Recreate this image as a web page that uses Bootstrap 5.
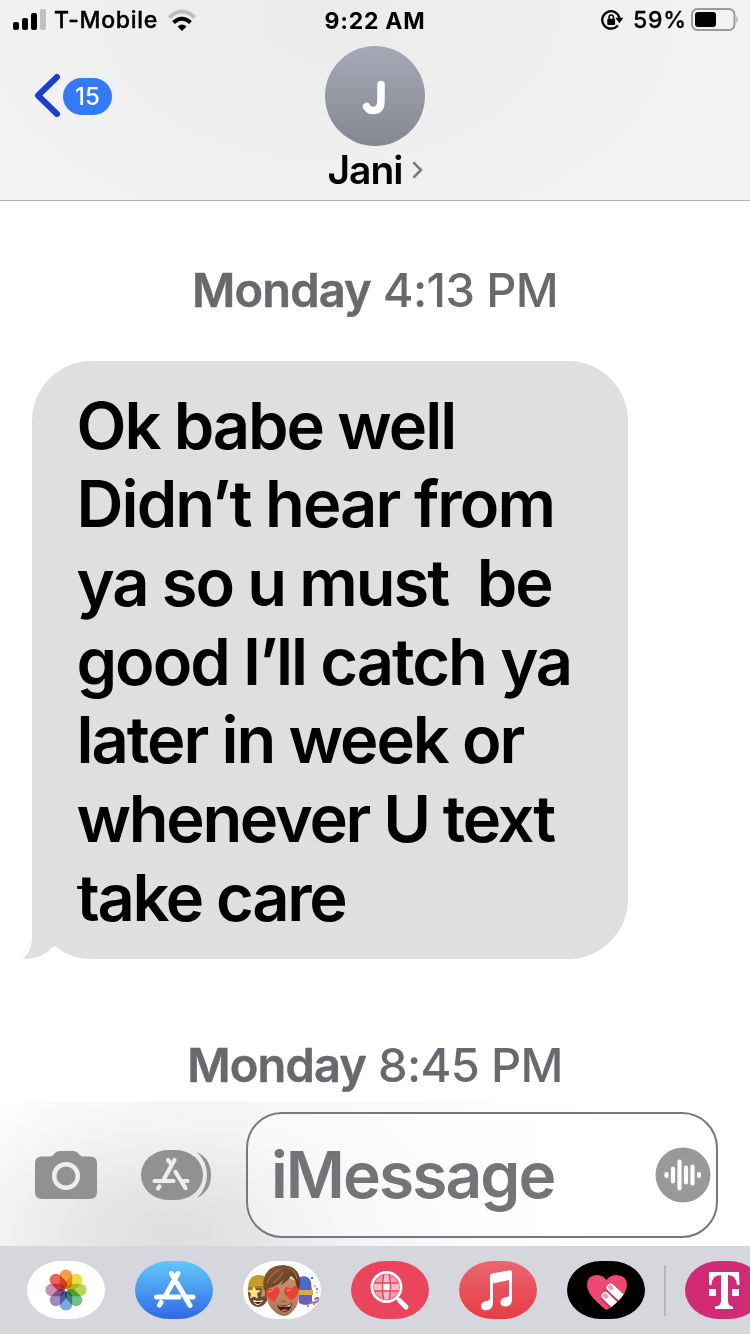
<!DOCTYPE html>
<html lang="en">
<head>
<meta charset="utf-8">
<meta name="viewport" content="width=device-width, initial-scale=1">
<title>Messages – Jani</title>
<link href="https://cdn.jsdelivr.net/npm/bootstrap@5.3.0/dist/css/bootstrap.min.css" rel="stylesheet">
<style>
body{font-family:Inter,"Liberation Sans",sans-serif;color:#000;height:1334px;overflow:hidden}
svg{display:block;flex:none}
.topbar{height:201px;border-bottom:1px solid #b0b0b2;background:radial-gradient(ellipse 420px 260px at 330px 20px,#ebebeb,#f3f3f3)}
.status{height:40px;line-height:42px;font-size:23px;font-weight:600}
.status>div{flex:1 1 0}
.carrier{letter-spacing:.7px;margin-left:8px;font-weight:500;-webkit-text-stroke:.4px #000}
.clock{letter-spacing:.75px;font-weight:700}
.unread{width:49px;height:37px;background:#347af6;font-size:24px;line-height:38px;font-weight:500}
.side{width:325px;padding:33px 0 0 34px}
.avatar{width:100px;height:100px;margin-top:6px;background:linear-gradient(#a5a9b6,#858891)}
.person{font-size:39px;line-height:48px;font-weight:600;letter-spacing:-1px}
.thread{height:901px}
.stamp{font-size:47px;line-height:56px;font-weight:500;color:#68686d;letter-spacing:-.65px}
.stamp b{font-weight:600;letter-spacing:-.85px;-webkit-text-stroke:.5px}
.bubble{width:596px;height:598px;margin:43px 0 0 32px;padding:25.500px 0 0 44.500px;border-radius:60px;background:#dfdfe1;font-size:65px;line-height:78.67px;font-weight:600;letter-spacing:-2.050px}
.bubble span{display:block;white-space:pre}
.bubble span:nth-child(2){letter-spacing:-1.900px}
.bubble span:nth-child(n+6){letter-spacing:-2.300px}
.tail{left:-10px;bottom:0}
.composer{height:144px;padding-top:2px;background:radial-gradient(ellipse 250px 150px at 175px 135px,#dedede 0,#e6e6e6 35%,#f4f4f4 75%,transparent 115%),linear-gradient(90deg,#fff,#f8f8f8 25%,#fafafa 55%,#fff 80%)}
.entry{width:472px;height:126px;margin-left:35px;border:2px solid #77777c;border-radius:36px;padding:0 5px 0 23px;background:linear-gradient(100deg,#ffffff66,#ffffff66 55%,#fff 80%);font-size:64px;font-weight:600;letter-spacing:-1.900px;color:#737378}
.apps{height:88px;background:#d5d7dc;padding:15px 0 0 27px}
.app-pill{width:78px;height:58px;flex:none;border-radius:34px/29px;margin-right:30px;overflow:hidden}
.rule{width:2px;height:51px;background:#b5b7bb;margin:4px 19px 0 -11px;flex:none}
.petals use{mix-blend-mode:multiply}
</style>
</head>
<body>
<header class="topbar">
  <div class="status d-flex">
    <div class="d-flex align-items-center">
      <svg class="ms-2" width="38" height="40"><g transform="translate(-8)"><rect x="13" y="22" width="6" height="8" rx="2"/><rect x="22" y="18" width="6" height="12" rx="2"/><rect x="31" y="13" width="6" height="17" rx="2"/><rect x="40" y="9" width="6" height="21" rx="2" fill="#bfbfbf"/></g></svg>
      <span class="carrier">T-Mobile</span>
      <svg width="32" height="40" style="margin-left:8px" viewBox="0 0 32 40"><g fill="none" stroke-width="4"><path d="M3.200 17.500Q16 5.500 28.800 17.500" stroke="#bdbdbd"/><path d="M7.500 22.500Q16 15 24.500 22.500" stroke="#000"/></g><path d="M11.500 26.500Q16 22.500 20.500 26.500L16 31Z"/></svg>
    </div>
    <div class="text-center clock">9:22 AM</div>
    <div class="d-flex align-items-center justify-content-end">
      <svg width="23" height="22" viewBox="0 0 23 22"><path d="M16.800 16.300A8.700 8.700 0 1 1 18.400 9" fill="none" stroke="#000" stroke-width="2.200"/><path d="M18.500 14.200L14.300 8.800H22.300Z"/><rect x="6.300" y="9.800" width="7.800" height="6.200" rx="1"/><path d="M8 10.500V8.300a2.200 2.200 0 0 1 4.400 0v2.200" fill="none" stroke="#000" stroke-width="1.500"/></svg>
      <span class="fw-medium" style="margin-left:9px;letter-spacing:.8px;-webkit-text-stroke:.3px">59%</span>
      <svg width="48" height="24" viewBox="0 0 48 24" style="margin:0 11px 0 4px"><rect x="1" y="1" width="42.500" height="21" rx="5.500" fill="none" stroke="#9a9a9a" stroke-width="2"/><rect x="4" y="4" width="21" height="15" rx="3"/><path d="M45.500 8q2.500 3.500 0 7z" fill="#9a9a9a"/></svg>
    </div>
  </div>
  <div class="d-flex">
    <div class="side d-flex align-items-start">
      <svg width="27" height="44" viewBox="0 0 27 44"><path d="M23 4L4 22.500L23 41" fill="none" stroke="#193fd8" stroke-width="6" stroke-linecap="round" stroke-linejoin="round"/></svg>
      <span class="unread rounded-pill text-white text-center" style="margin:5px 0 0 2px">15</span>
    </div>
    <div class="text-center">
      <div class="avatar rounded-circle"><svg width="100" height="100"><path d="M56 38.500V55Q56 64.500 48 64.500Q43.500 64.500 41.500 60.500" fill="none" stroke="#fff" stroke-width="7.500" stroke-linecap="round"/></svg></div>
      <div class="person d-flex align-items-center justify-content-center">Jani<svg width="11" height="18" viewBox="0 0 11 18" style="margin-left:9px"><path d="M2 2L9 9L2 16" fill="none" stroke="#76797e" stroke-width="2.500" stroke-linecap="round"/></svg></div>
    </div>
  </div>
</header>
<main class="thread bg-white">
  <div class="stamp text-center" style="padding-top:61px"><b>Monday</b> 4:13 PM</div>
  <div class="bubble position-relative"><span>Ok babe well</span><span>Didn’t hear from</span><span>ya so u must  be</span><span>good I’ll catch ya</span><span>later in week or</span><span>whenever U text</span><span>take care</span>
    <svg class="tail position-absolute" width="70" height="70" viewBox="0 0 70 70"><path d="M10 0V47Q10 64 0 70Q18 71 31 58L60 10V0Z" fill="#dfdfe1"/></svg>
  </div>
  <div class="stamp text-center" style="padding-top:78px"><b>Monday</b> 8:45 PM</div>
</main>
<section class="composer d-flex align-items-center">
  <svg width="62" height="50" viewBox="0 0 62 50" style="margin-left:35px"><path d="M7 6.500H16Q18 6 20 3Q22 1 25 1H38Q41 1 43 3Q45 6 47 6.500H55Q62 6.500 62 13V42Q62 49 55 49H7Q0 49 0 42V13Q0 6.500 7 6.500Z" fill="#919191"/><circle cx="31" cy="26" r="11.800" fill="none" stroke="#eee" stroke-width="4.500"/></svg>
  <svg width="70" height="50" viewBox="0 0 70 50" style="margin-left:44px"><rect width="62" height="50" rx="27" ry="25" fill="#919191"/><path d="M56 2Q70 9 70 25Q70 41 56 48Q66 38 66 25Q66 12 56 2Z" fill="#919191"/><g transform="translate(30.500 25)" stroke="#eee" stroke-width="4.200" stroke-linecap="round" fill="none"><path d="M-3.500-15L-.5-11M3-15L-7.500 4M4-3L14 13M-17 6H2M11 6H16M-12 11.500L-13.500 13.500"/></g></svg>
  <div class="entry d-flex align-items-center justify-content-between"><span>iMessage</span>
    <svg width="56" height="56" viewBox="0 0 56 56"><circle cx="28" cy="28" r="27.500" fill="#999"/><path d="M11.500 27V29M18 21.500V34.500M24.500 14.500V41.500M31 20.500V35.500M37.500 19.500V36.500M44 27V29" stroke="#fff" stroke-width="4.200" stroke-linecap="round"/></svg>
  </div>
</section>
<footer class="apps d-flex overflow-hidden">
  <div class="app-pill bg-white"><svg width="78" height="58" viewBox="-39 -29 78 58"><defs><rect id="petal" x="-6.200" y="-20.500" width="12.400" height="19.500" rx="6.200"/></defs><g class="petals" style="isolation:isolate"><use href="#petal" fill="#f2a044"/><use href="#petal" fill="#ecdf3f" transform="rotate(45)"/><use href="#petal" fill="#b9d65c" transform="rotate(90)"/><use href="#petal" fill="#75bd8b" transform="rotate(135)"/><use href="#petal" fill="#79abdf" transform="rotate(180)"/><use href="#petal" fill="#9c8bc4" transform="rotate(225)"/><use href="#petal" fill="#cf8cb4" transform="rotate(270)"/><use href="#petal" fill="#e96355" transform="rotate(315)"/></g><circle r="1.300" fill="#fff"/></svg></div>
  <div class="app-pill" style="background:linear-gradient(#61c8f8,#3169e8)"><svg width="78" height="58" viewBox="-39 -29 78 58"><g stroke="#fff" stroke-width="5" stroke-linecap="round" fill="none"><path d="M-2.500-16.500L-.5-13M4-16.500L-8.500 5.500M3-7L16 15.500M-17.500 7H5M13 7H19M-13 12.500L-14.500 15"/></g></svg></div>
  <div class="app-pill bg-white"><svg width="78" height="58" viewBox="0 0 78 58"><defs><linearGradient id="skin" x2="0" y2="1"><stop stop-color="#c98e65"/><stop offset=".5" stop-color="#c08763"/><stop offset="1" stop-color="#a8714f"/></linearGradient><linearGradient id="hair" x2="1" y2="1"><stop stop-color="#8f5a34"/><stop offset="1" stop-color="#55341f"/></linearGradient></defs>
    <path d="M5 26Q4 45 15 46Q26 45 26 28Z" fill="#6e4a33"/><path d="M5 27Q5 14 16 14Q25 14 26 26Q16 22 5 27Z" fill="#c69b2d"/><path d="M5 27Q15 22 26 26V29Q15 25 5 30Z" fill="#a87d20"/><path d="M11 25l2 4 5 .5-4 3 1 5-4-2-4 2 1-5-4-3 5-.5z" fill="#ffe681"/><path d="M19 28l3 1v6l-4 1z" fill="#b79c55"/><path d="M10 39Q15 41 20 39Q18 44 14 44Q11 43 10 39Z" fill="#fff"/><path d="M11 41H19Q15 45 11 41Z" fill="#3e1d18"/>
    <path d="M54 17Q66 12 68 22L69 30V42Q63 46 56 42Z" fill="#6b5cc0"/><path d="M54 18Q65 12 68 22V27Q62 28 54 26Z" fill="#3f6fd0"/><path d="M60 17l2 2 3-1-1 3" fill="#d14b5a"/><path d="M56 29H70V34H56Z" fill="#dfa64a"/><path d="M66 41Q75 43 76 38Q74 35 72 39" fill="none" stroke="#8d67c3" stroke-width="2"/><g fill="#3e78dd"><circle cx="69" cy="17" r="1.200"/><circle cx="74" cy="28" r="1"/><circle cx="65" cy="45" r="1"/></g><g fill="#edbd3b"><circle cx="72" cy="25" r="1.200"/><circle cx="74" cy="31" r="1"/></g><circle cx="71" cy="43" r="1.200" fill="#e57f4b"/>
    <path d="M23 22Q22 40 28 47Q35 55 41 55Q47 55 53 46Q57 40 56 22Q40 10 23 22Z" fill="url(#skin)"/><path d="M22 30Q19 24 21 17Q25 4 41 4Q57 6 57 21Q57 27 55 29Q53 25 52 19Q50 17 48 15Q44 21 38 24Q40 20 41 18Q34 26 26 27Q24 28 24 31Z" fill="url(#hair)"/><path d="M24 22Q28 12 38 8M30 22Q36 18 40 11M46 7Q53 10 54 18" fill="none" stroke="#aa7044" stroke-width="1.200"/>
    <path d="M34 44Q42 46 49 42Q48 50 42 51Q36 50 34 44Z" fill="#481817"/><path d="M35 44.500Q42 46.500 48 43L47 45.500H36.500Z" fill="#fff"/><path d="M38 49.500Q42 47 45 49Q42 51.500 38 49.500Z" fill="#cf5857"/><path d="M38 40Q41 42 43 39.500" stroke="#8d533b" fill="none"/>
    <g fill="#ea403a"><path d="M31 41Q26 38 23.500 34.500Q21.500 29.500 25 28Q28 27 30 29.500Q31 26 34 26Q38 27.500 36 33Q34 38 31 41Z"/><path d="M49 39.500Q44 37 41.500 33Q40 28 43.500 26.500Q46.500 25.500 48.500 28Q50 24.500 53 25Q57 27 55 32Q53 37 49 39.500Z"/></g><path d="M26 31Q27 29.500 28.500 30.500M44.500 29.500Q45.500 28 47 29" fill="none" stroke="#f98a80" stroke-width="1.200" stroke-linecap="round"/></svg></div>
  <div class="app-pill" style="background:#ea455c"><svg width="78" height="58" viewBox="0 0 78 58"><defs><clipPath id="globe"><circle cx="35.500" cy="26" r="12.500"/></clipPath></defs><circle cx="35.500" cy="26" r="12.500" fill="#f59baa"/><g clip-path="url(#globe)"><path d="M22 22.500H49V29.500H22Z" fill="#f8c1ca"/><path d="M32 13H39V39H32Z" fill="#f8bdc6"/><path d="M32 22.500H39V29.500H32Z" fill="#fff"/><path d="M22 22H49M22 30H49M33 12Q30 26 33 40M38 12Q41 26 38 40" fill="none" stroke="#ea455c" stroke-width="1.500"/></g><circle cx="35.500" cy="26" r="14.600" fill="none" stroke="#fff" stroke-width="2.800"/><path d="M46 37L49 40" stroke="#fff" stroke-width="3"/><path d="M49 40L55 46" stroke="#fff" stroke-width="5" stroke-linecap="round"/></svg></div>
  <div class="app-pill" style="background:linear-gradient(#ea6674,#e73c42)"><svg width="78" height="58" viewBox="0 0 78 58"><path d="M31 15Q31 13 33 12.600L51 9.200Q53 9 53 11V38Q53 45.500 46.500 45.500Q41 45 41.500 41Q42 37 47 36.300Q50 36 50 34V19L34 22.500V42Q34 49 27 49.200Q21.500 49 22 44.500Q22.500 41 27 40Q31 39.500 31 37Z" fill="#fff"/></svg></div>
  <div class="app-pill bg-black"><svg width="78" height="58" viewBox="0 0 78 58"><defs><clipPath id="heart"><path d="M39.500 49Q35 46 31 42Q20 32 20 24Q20 15 29 14Q36 14 39.500 19Q43 14 50 14Q60 15 60 24Q60 32 49 42Q44 47 39.500 49Z"/></clipPath></defs><g clip-path="url(#heart)"><path d="M15 10H65V54H15Z" fill="#ee4770"/><path d="M43.500 27L59 42M38.500 36L54 51" stroke="#a9304f" stroke-width="9.500" stroke-linecap="round"/><path d="M43.500 26.500L59 41M38.500 35L54 50" stroke="#fff" stroke-width="8" stroke-linecap="round"/><path d="M43 26L44 27M38 34.500L39 35.500" stroke="#f29caf" stroke-width="4.500" stroke-linecap="round"/></g></svg></div>
  <div class="rule"></div>
  <div class="app-pill" style="background:#d12b75"><svg width="78" height="58" viewBox="0 0 78 58"><path d="M24 11H54L54.500 24H52Q51 14 43 14V40Q43 45 48 45.500V48H30V45.500Q36 45 36 40V14Q27 14 26.500 24H24ZM24 28H31V35H24ZM47 28H54V35H47Z" fill="#fff"/></svg></div>
</footer>
<script src="https://cdn.jsdelivr.net/npm/bootstrap@5.3.0/dist/js/bootstrap.bundle.min.js"></script>
</body>
</html>
